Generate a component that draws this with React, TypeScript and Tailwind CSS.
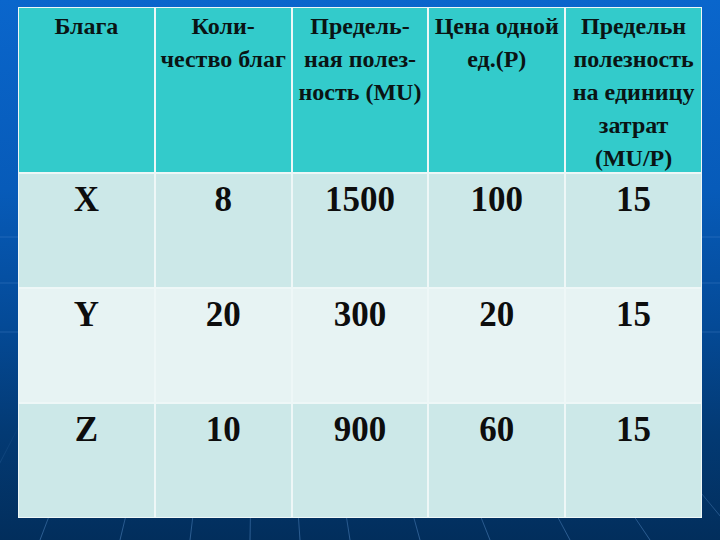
import React from "react";

const headers: string[][] = [
  ["Блага"],
  ["Коли-", "чество благ"],
  ["Предель-", "ная полез-", "ность (MU)"],
  ["Цена одной", "ед.(P)"],
  ["Предельн", "полезность", "на единицу", "затрат", "(MU/P)"],
];

const rows: string[][] = [
  ["X", "8", "1500", "100", "15"],
  ["Y", "20", "300", "20", "15"],
  ["Z", "10", "900", "60", "15"],
];

function Background() {
  const vx = 260;
  const vy = -40;
  const bottomXs = [-200, -120, -40, 40, 120, 190, 250, 300, 350, 420, 490, 570, 650, 740, 840];
  return (
    <svg className="absolute inset-0" width="720" height="540" viewBox="0 0 720 540">
      <defs>
        <linearGradient id="fade" gradientUnits="userSpaceOnUse" x1="0" y1="0" x2="0" y2="540">
          <stop offset="0" stopColor="#6fa8e6" stopOpacity="0" />
          <stop offset="0.78" stopColor="#6fa8e6" stopOpacity="0" />
          <stop offset="1" stopColor="#6fa8e6" stopOpacity="0.4" />
        </linearGradient>
      </defs>
      {[237, 283, 332].map((y) => (
        <line key={y} x1="0" y1={y} x2="720" y2={y} stroke="#5e93d6" strokeOpacity="0.3" strokeWidth="1" />
      ))}
      {bottomXs.map((bx, i) => (
        <line key={i} x1={vx} y1={vy} x2={bx} y2={540} stroke="url(#fade)" strokeWidth="1" />
      ))}
    </svg>
  );
}

export default function App() {
  return (
    <div className="relative w-[720px] h-[540px] overflow-hidden bg-[linear-gradient(to_bottom,#0a66cc_0%,#075bb9_35%,#044a97_60%,#033a74_80%,#022e5c_100%)] font-['Liberation_Serif','DejaVu_Serif_Condensed','DejaVu_Serif',serif]">
      <Background />
      <div className="relative pt-[7px] pl-[18px]">
        <div className="w-[684px] bg-[#eef7f7] p-[1px] grid grid-cols-5 gap-[2px] text-black font-bold">
          {headers.map((lines, i) => (
            <div
              key={i}
              className="h-[164px] bg-[#33cbcb] pt-[2px] text-center text-[24px] leading-[33px] whitespace-nowrap text-[#0a1414]"
            >
              {lines.map((l, j) => (
                <div key={j}>{l}</div>
              ))}
            </div>
          ))}
          {rows.map((r, ri) =>
            r.map((c, ci) => (
              <div
                key={`${ri}-${ci}`}
                className={`h-[113px] pt-[8px] text-center text-[35px] leading-none text-[#0d0d0d] ${
                  ri === 1 ? "bg-[#e7f3f3]" : "bg-[#cce8e8]"
                }`}
              >
                {c}
              </div>
            ))
          )}
        </div>
      </div>
    </div>
  );
}
